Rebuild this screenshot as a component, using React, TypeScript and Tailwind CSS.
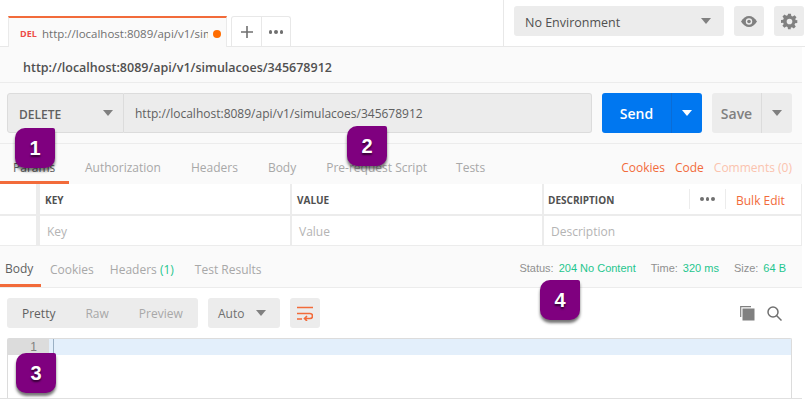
import React from 'react';

const Caret = ({ className }: { className: string }) => (
  <svg width="10" height="6" viewBox="0 0 10 6" className={className}>
    <path d="M0 0h10L5 6z" fill="currentColor" />
  </svg>
);

const Badge = ({ n, className }: { n: number; className: string }) => (
  <div
    className={`absolute w-10 h-10 bg-[#7f007f] rounded-tl-[10px] rounded-br-[10px] rounded-bl-[10px] rounded-tr-[2px] shadow-[0_3px_3px_rgba(0,0,0,0.55)] flex items-center justify-center text-white text-[20px] font-bold font-['Liberation_Sans',sans-serif] [text-shadow:0_2px_2px_rgba(0,0,0,0.6)] ${className}`}
  >
    {n}
  </div>
);

export default function App() {
  return (
    <div className="relative w-[805px] h-[402px] overflow-hidden bg-white font-['Open_Sans',sans-serif] text-[#505050]">
      {/* top bar */}
      <div className="h-[47px] flex border-b border-[#e8e8e8] pl-2">
        <div className="w-[219px] h-[31px] mt-[16px] bg-[#fafafa] border-t-2 border-[#f26b3a] border-x border-x-[#eaeaea] flex items-center pl-[11px] pt-[2px]">
          <span className="text-[9px] font-bold text-[#ed4b48] w-[22px]">DEL</span>
          <span className="text-[11.5px] text-[#707070] w-[166px] overflow-hidden whitespace-nowrap">http://localhost:8089/api/v1/simulacoes/345678912</span>
          <span className="ml-[5px] w-2 h-2 rounded-full bg-[#ff6c00]"></span>
        </div>
        <div className="ml-[4px] mt-[16px] h-[31px] w-[60px] flex border border-b-0 border-[#e8e8e8] rounded-t-[3px] text-[#707070]">
          <div className="w-[30px] flex items-center justify-center border-r border-[#e8e8e8]">
            <svg width="12" height="12" viewBox="0 0 12 12"><path d="M6 0v12M0 6h12" stroke="currentColor" strokeWidth="1.6" /></svg>
          </div>
          <div className="flex-1 flex items-center justify-center gap-[2px]">
            <span className="w-[3.5px] h-[3.5px] rounded-full bg-current"></span>
            <span className="w-[3.5px] h-[3.5px] rounded-full bg-current"></span>
            <span className="w-[3.5px] h-[3.5px] rounded-full bg-current"></span>
          </div>
        </div>
        <div className="ml-auto w-[302px] border-l border-[#e8e8e8] flex pt-[6px] pl-[10px] gap-[10px]">
          <div className="w-[210px] h-[30px] bg-[#ececec] rounded-[3px] flex items-center justify-between pl-[11px] pr-[13px] text-[12.5px]">
            <span className="pt-[4px]">No Environment</span>
            <Caret className="text-[#808080]" />
          </div>
          <div className="w-[30px] h-[30px] bg-[#ececec] rounded-[3px] flex items-center justify-center">
            <svg width="16" height="11" viewBox="0 0 16 11">
              <path d="M0 5.5C2 2 5 0 8 0s6 2 8 5.5C14 9 11 11 8 11S2 9 0 5.5z" fill="#808080" />
              <circle cx="8" cy="5.5" r="3.2" fill="#ececec" />
              <circle cx="8" cy="5.5" r="1.8" fill="#808080" />
            </svg>
          </div>
          <div className="w-[30px] h-[30px] bg-[#ececec] rounded-[3px] flex items-center justify-center">
            <svg width="17" height="17" viewBox="0 0 24 24">
              <path fillRule="evenodd" fill="#808080" d="M10 1h4l.6 3.1 1.9.8 2.6-1.8 2.8 2.8-1.8 2.6.8 1.9L23 10v4l-3.1.6-.8 1.9 1.8 2.6-2.8 2.8-2.6-1.8-1.9.8L13.900 23h-4l-.6-3.100-1.900-.8-2.600 1.800-2.800-2.800 1.800-2.600-.8-1.900L0 14v-4l3.100-.6.8-1.900L2.100 4.900l2.800-2.800 2.600 1.800 1.900-.8zM12 8a4 4 0 1 0 0 8 4 4 0 0 0 0-8z" />
            </svg>
          </div>
        </div>
      </div>

      <div className="w-[802px] bg-[#fafafa]">
        {/* request name */}
        <div className="h-[36px] border-b border-[#ececec] flex items-center pl-[23px] pt-[8px] text-[12.5px] font-semibold text-[#505050]">
          http://localhost:8089/api/v1/simulacoes/345678912
        </div>

        {/* url row */}
        <div className="h-[61px] border-b border-[#ececec] flex pt-[10px] pl-[7px]">
          <div className="w-[117px] h-[40px] bg-[#ececec] border border-[#dcdcdc] rounded-l-[3px] flex items-center justify-between pl-[11px] pr-[10px] text-[12px] font-semibold text-[#606060]">
            <span className="pt-[3px]">DELETE</span>
            <Caret className="text-[#808080]" />
          </div>
          <div className="w-[468px] h-[40px] bg-[#ececec] border border-l-0 border-[#dcdcdc] rounded-r-[3px] flex items-center pl-[11px] pt-[1px] text-[12px] text-[#606060]">
            http://localhost:8089/api/v1/simulacoes/345678912
          </div>
          <div className="ml-[10px] w-[100px] h-[40px] bg-[#0077f0] rounded-[3px] flex text-white">
            <div className="w-[70px] flex items-center justify-center text-[14px] font-semibold border-r border-[#0a6cd6]">Send</div>
            <div className="flex-1 flex items-center justify-center"><Caret className="text-white" /></div>
          </div>
          <div className="ml-[10px] w-[80px] h-[40px] bg-[#ececec] rounded-[3px] flex text-[#808080]">
            <div className="w-[50px] flex items-center justify-center text-[14px] font-semibold border-r border-[#dcdcdc]">Save</div>
            <div className="flex-1 flex items-center justify-center"><Caret className="text-[#808080]" /></div>
          </div>
        </div>

        {/* request tabs */}
        <div className="h-[40px] flex items-center text-[12px] text-[#a8a8a8]">
          <div className="h-full w-[69px] flex items-center pl-[13px] pt-[10px] text-[#606060] border-b-[3px] border-[#f26b3a]">Params</div>
          <span className="ml-[16px] pt-[7px]">Authorization</span>
          <span className="ml-[30px] pt-[7px]">Headers</span>
          <span className="ml-[30px] pt-[7px]">Body</span>
          <span className="ml-[30px] pt-[7px]">Pre-request Script</span>
          <span className="ml-[29px] pt-[7px]">Tests</span>
          <div className="ml-auto pr-[10px] pt-[8px] flex">
            <span className="text-[#f26b3a]">Cookies</span>
            <span className="ml-[10px] text-[#f26b3a]">Code</span>
            <span className="ml-[10px] text-[#fbc3ae]">Comments (0)</span>
          </div>
        </div>

        {/* params table */}
        <div className="h-[62px] bg-[#ececec] grid grid-cols-[38px_250px_250px_1fr] gap-x-[2px] gap-y-[2px] pb-[1px] pr-[1px] text-[10px]">
          <div className="bg-white mr-[2px]"></div>
          <div className="bg-white flex items-center pl-[5px] pt-[4px] font-bold text-[#505050]">KEY</div>
          <div className="bg-white flex items-center pl-[5px] pt-[4px] font-bold text-[#505050]">VALUE</div>
          <div className="bg-white flex items-center pl-[4px] font-bold text-[#505050]">
            <span className="w-[141px] pt-[4px]">DESCRIPTION</span>
            <div className="w-[37px] h-[20px] flex items-center justify-center gap-[2px] border-l border-r border-[#ececec] text-[#707070]">
              <span className="w-[3.5px] h-[3.5px] rounded-full bg-current"></span>
              <span className="w-[3.5px] h-[3.5px] rounded-full bg-current"></span>
              <span className="w-[3.5px] h-[3.5px] rounded-full bg-current"></span>
            </div>
            <span className="ml-[10px] pt-[4px] text-[12px] font-normal text-[#f26b3a]">Bulk Edit</span>
          </div>
          <div className="bg-white mr-[2px]"></div>
          <div className="bg-white flex items-center pl-[7px] pt-[4px] text-[12px] text-[#b4b4b4]">Key</div>
          <div className="bg-white flex items-center pl-[7px] pt-[4px] text-[12px] text-[#b4b4b4]">Value</div>
          <div className="bg-white flex items-center pl-[7px] pt-[4px] text-[12px] text-[#b4b4b4]">Description</div>
        </div>

        {/* response tabs */}
        <div className="h-[42px] border-b border-[#ececec] flex items-center text-[12px] text-[#a8a8a8]">
          <div className="h-[41px] w-[41px] flex items-center pl-[5px] pt-[8px] text-[#606060] border-b-[3px] border-[#f26b3a]">Body</div>
          <span className="ml-[9px] pt-[6px]">Cookies</span>
          <span className="ml-[16px] pt-[6px]">Headers <span className="text-[#1fc68e]">(1)</span></span>
          <span className="ml-[21px] pt-[6px]">Test Results</span>
          <div className="ml-auto pr-[16px] pt-[3px] flex text-[11px] font-['Liberation_Sans',sans-serif] text-[#1fc68e]">
            <span className="text-[#909090] mr-[5px]">Status:</span>
            <span>204 No Content</span>
            <span className="text-[#909090] ml-[15px] mr-[5px]">Time:</span>
            <span>320 ms</span>
            <span className="text-[#909090] ml-[15px] mr-[5px]">Size:</span>
            <span>64 B</span>
          </div>
        </div>
      </div>

      {/* response body */}
      <div className="w-[802px] h-[111px] bg-white border-b border-[#e0e0e0] px-[7px] pt-[10px]">
        <div className="h-[30px] flex">
          <div className="w-[191px] bg-[#ececec] rounded-[3px] flex items-center pt-[2px] text-[12px] text-[#a8a8a8]">
            <span className="ml-[15px] text-[#606060]">Pretty</span>
            <span className="ml-[30px]">Raw</span>
            <span className="ml-[30px]">Preview</span>
          </div>
          <div className="ml-[10px] w-[72px] bg-[#ececec] rounded-[3px] flex items-center justify-between pl-[10px] pr-[14px] text-[12px] text-[#707070]">
            <span className="pt-[2px]">Auto</span>
            <Caret className="text-[#808080]" />
          </div>
          <div className="ml-[10px] w-[30px] bg-[#ececec] rounded-[3px] flex items-center justify-center">
            <svg width="16" height="15" viewBox="0 0 16 15" fill="none" stroke="#f26b3a" strokeWidth="1.6">
              <path d="M0 1.500h16M0 7.500h13a2.500 2.500 0 0 1 0 5H8M10 10l-2.500 2.500L10 15M0 13h5" />
            </svg>
          </div>
          <div className="ml-auto flex items-center gap-[12px] pr-[13px]">
            <svg width="15" height="15" viewBox="0 0 15 15">
              <path d="M0.700 11V0.700H11" fill="none" stroke="#808080" strokeWidth="1.200" />
              <rect x="2.500" y="2.500" width="12" height="12" fill="#808080" />
            </svg>
            <svg width="15" height="15" viewBox="0 0 15 15" fill="none" stroke="#707070" strokeWidth="1.500">
              <circle cx="6" cy="6" r="5" />
              <path d="M9.500 9.500L14.500 14.500" />
            </svg>
          </div>
        </div>
        <div className="mt-[10px] w-[785px] h-[60px] bg-white border border-b-0 border-[#dcdcdc] rounded-t-[2px]">
          <div className="h-[16px] bg-[#e3effb] flex">
            <div className="w-[41px] bg-[#dcdcdc] text-[12px] leading-[16px] text-[#808080] text-right pr-[12px] font-['Liberation_Sans',sans-serif]">1</div>
            <div className="ml-[4px] w-px bg-[#9ab0c4]"></div>
          </div>
        </div>
      </div>

      <Badge n={1} className="left-[15px] top-[128px]" />
      <Badge n={2} className="left-[347px] top-[126px]" />
      <Badge n={3} className="left-[16px] top-[353px]" />
      <Badge n={4} className="left-[540px] top-[280px]" />
    </div>
  );
}
